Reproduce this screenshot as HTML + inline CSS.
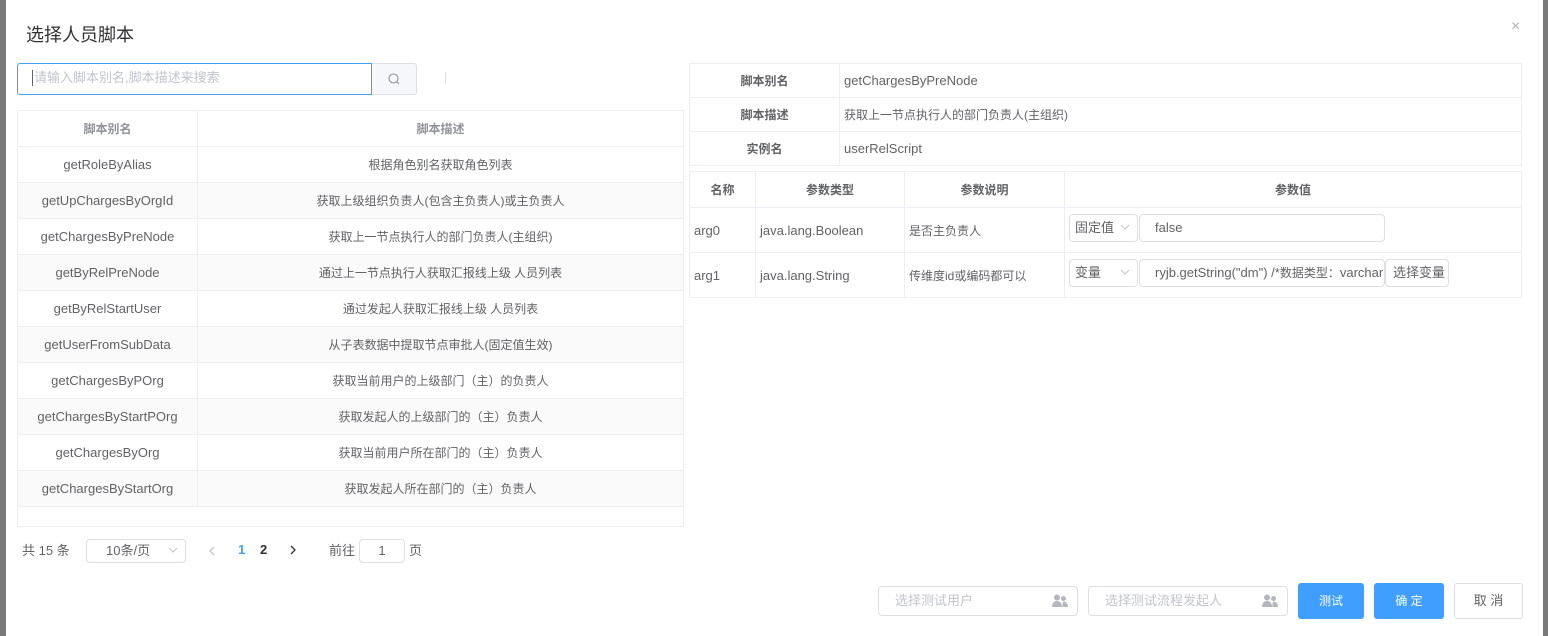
<!DOCTYPE html><html><head><meta charset="utf-8"><style>
*{box-sizing:border-box;margin:0;padding:0}
body{width:1548px;height:636px;background:#7a7a7a;font-family:"Liberation Sans","Noto Sans CJK SC",sans-serif;font-size:13px;color:#606266;position:relative;overflow:hidden}
.dlg{position:absolute;left:6px;top:0;width:1537px;height:636px;background:#fff}
.a{position:absolute}
table{border-collapse:collapse;position:absolute;table-layout:fixed}
td{border:1px solid #ebeef5;height:36px;text-align:center;font-size:13px;color:#606266;padding:0 4px;white-space:nowrap;overflow:hidden}
td.c,.c{font-size:12px}
.l{text-align:left}
.btn{position:absolute;border-radius:3px;text-align:center;font-size:12px}
.inp{position:absolute;border:1px solid #dcdfe6;border-radius:4px;background:#fff;font-size:13px;color:#606266;white-space:nowrap;overflow:hidden}
.arr{position:absolute;right:7px;top:50%;margin-top:-4px}
</style></head><body>
<div class="dlg"></div>
<div class="a" style="left:26px;top:21px;font-size:18px;color:#303133">选择人员脚本</div>
<div class="a" style="left:1511px;top:18px;font-size:16px;color:#b0b3b8">×</div>
<div class="a" style="left:17px;top:63px;width:355px;height:32px;border:1px solid #409eff;border-radius:3px 0 0 3px;background:#fff"></div>
<div class="a" style="left:32px;top:70px;width:1px;height:16px;background:#606266"></div>
<div class="a" style="left:34px;top:69px;font-size:13px;line-height:18px;color:#c0c4cc">请输入脚本别名,脚本描述来搜索</div>
<div class="a" style="left:372px;top:63px;width:45px;height:32px;border:1px solid #dcdfe6;border-left:none;background:#f5f7fa;border-radius:0 3px 3px 0"></div>
<svg class="a" style="left:387px;top:72px" width="14" height="14" viewBox="0 0 14 14"><circle cx="6.5" cy="6.5" r="4.5" fill="none" stroke="#909399" stroke-width="1.1"/><line x1="10" y1="10" x2="12" y2="12" stroke="#909399" stroke-width="1.1"/></svg>
<div class="a" style="left:445px;top:72px;width:1px;height:12px;background:#dcdfe6"></div>
<table style="left:17px;top:110px;width:667px">
<col style="width:180px"><col>
<tr><td class="c" style="color:#909399;font-weight:bold">脚本别名</td><td class="c" style="color:#909399;font-weight:bold">脚本描述</td></tr>
<tr><td>getRoleByAlias</td><td class="c">根据角色别名获取角色列表</td></tr>
<tr style="background:#fafafa"><td>getUpChargesByOrgId</td><td class="c">获取上级组织负责人(包含主负责人)或主负责人</td></tr>
<tr><td>getChargesByPreNode</td><td class="c">获取上一节点执行人的部门负责人(主组织)</td></tr>
<tr style="background:#fafafa"><td>getByRelPreNode</td><td class="c">通过上一节点执行人获取汇报线上级 人员列表</td></tr>
<tr><td>getByRelStartUser</td><td class="c">通过发起人获取汇报线上级 人员列表</td></tr>
<tr style="background:#fafafa"><td>getUserFromSubData</td><td class="c">从子表数据中提取节点审批人(固定值生效)</td></tr>
<tr><td>getChargesByPOrg</td><td class="c">获取当前用户的上级部门（主）的负责人</td></tr>
<tr style="background:#fafafa"><td>getChargesByStartPOrg</td><td class="c">获取发起人的上级部门的（主）负责人</td></tr>
<tr><td>getChargesByOrg</td><td class="c">获取当前用户所在部门的（主）负责人</td></tr>
<tr style="background:#fafafa"><td>getChargesByStartOrg</td><td class="c">获取发起人所在部门的（主）负责人</td></tr>
<tr><td colspan="2" style="height:20px"></td></tr>
</table>
<div class="a" style="left:22px;top:542px;font-size:13px;line-height:18px">共 15 条</div>
<div class="inp" style="left:86px;top:539px;width:100px;height:24px;line-height:22px;padding-left:19px">10条/页<svg class="arr" width="10" height="6" viewBox="0 0 10 6"><path d="M1 1l4 4 4-4" fill="none" stroke="#c0c4cc"/></svg></div>
<svg class="a" style="left:209px;top:546px" width="6" height="10" viewBox="0 0 6 10"><path d="M5 1L1 5l4 4" fill="none" stroke="#c0c4cc" stroke-width="1.3"/></svg>
<div class="a" style="left:238px;top:542px;color:#409eff;font-weight:bold;line-height:16px">1</div>
<div class="a" style="left:260px;top:542px;color:#303133;font-weight:bold;line-height:16px">2</div>
<svg class="a" style="left:290px;top:545px" width="6" height="10" viewBox="0 0 6 10"><path d="M1 1l4 4-4 4" fill="none" stroke="#303133" stroke-width="1.3"/></svg>
<div class="a" style="left:329px;top:542px;line-height:18px">前往</div>
<div class="inp" style="left:359px;top:539px;width:46px;height:24px;text-align:center;line-height:22px">1</div>
<div class="a" style="left:409px;top:542px;line-height:18px">页</div>

<table style="left:689px;top:63px;width:833px">
<col style="width:150px"><col>
<tr><td class="c" style="font-weight:bold;height:34px">脚本别名</td><td class="l" style="height:34px">getChargesByPreNode</td></tr>
<tr><td class="c" style="font-weight:bold;height:34px">脚本描述</td><td class="l c" style="height:34px">获取上一节点执行人的部门负责人(主组织)</td></tr>
<tr><td class="c" style="font-weight:bold;height:34px">实例名</td><td class="l" style="height:34px">userRelScript</td></tr>
</table>
<table style="left:689px;top:171px;width:833px">
<col style="width:66px"><col style="width:149px"><col style="width:160px"><col>
<tr><td class="c" style="font-weight:bold;height:34px">名称</td><td class="c" style="font-weight:bold">参数类型</td><td class="c" style="font-weight:bold">参数说明</td><td class="c" style="font-weight:bold">参数值</td></tr>
<tr><td class="l" style="height:45px">arg0</td><td class="l">java.lang.Boolean</td><td class="l c">是否主负责人</td><td></td></tr>
<tr><td class="l" style="height:45px">arg1</td><td class="l">java.lang.String</td><td class="l c">传维度id或编码都可以</td><td></td></tr>
</table>
<div class="inp c" style="left:1069px;top:214px;width:69px;height:28px;line-height:26px;padding-left:5px">固定值<svg class="arr" width="10" height="6" viewBox="0 0 10 6"><path d="M1 1l4 4 4-4" fill="none" stroke="#c0c4cc"/></svg></div>
<div class="inp" style="left:1139px;top:214px;width:246px;height:28px;line-height:26px;padding-left:15px">false</div>
<div class="inp c" style="left:1069px;top:259px;width:69px;height:28px;line-height:26px;padding-left:5px">变量<svg class="arr" width="10" height="6" viewBox="0 0 10 6"><path d="M1 1l4 4 4-4" fill="none" stroke="#c0c4cc"/></svg></div>
<div class="inp" style="left:1139px;top:259px;width:246px;height:28px;line-height:26px;padding-left:15px">ryjb.getString("dm") /*<span class="c">数据类型：</span>varchar</div>
<div class="inp c" style="left:1385px;top:259px;width:64px;height:28px;line-height:26px;padding-left:7px">选择变量</div>

<div class="inp" style="left:878px;top:586px;width:200px;height:30px;line-height:28px;padding-left:16px;color:#c0c4cc">选择测试用户</div>
<div class="inp" style="left:1088px;top:586px;width:200px;height:30px;line-height:28px;padding-left:16px;color:#c0c4cc">选择测试流程发起人</div>
<svg class="a" style="left:1052px;top:594px" width="16" height="13" viewBox="0 0 16 13"><circle cx="5" cy="3.5" r="3" fill="#b4b7bd"/><path d="M0 13c0-4 2-6 5-6s5 2 5 6z" fill="#b4b7bd"/><circle cx="11.5" cy="4.5" r="2.5" fill="#b4b7bd"/><path d="M10.5 13c0-3 0-5 1-5.5 2.5 0 4.5 2 4.5 5.5z" fill="#b4b7bd"/></svg>
<svg class="a" style="left:1262px;top:594px" width="16" height="13" viewBox="0 0 16 13"><circle cx="5" cy="3.5" r="3" fill="#b4b7bd"/><path d="M0 13c0-4 2-6 5-6s5 2 5 6z" fill="#b4b7bd"/><circle cx="11.5" cy="4.5" r="2.5" fill="#b4b7bd"/><path d="M10.5 13c0-3 0-5 1-5.5 2.5 0 4.5 2 4.5 5.5z" fill="#b4b7bd"/></svg>
<div class="btn" style="left:1298px;top:583px;width:66px;height:36px;background:#409eff;color:#fff;line-height:36px">测试</div>
<div class="btn" style="left:1374px;top:583px;width:70px;height:36px;background:#409eff;color:#fff;line-height:36px">确 定</div>
<div class="btn" style="left:1454px;top:583px;width:69px;height:36px;border:1px solid #dcdfe6;color:#606266;line-height:34px;font-size:13px">取 消</div>
</body></html>
